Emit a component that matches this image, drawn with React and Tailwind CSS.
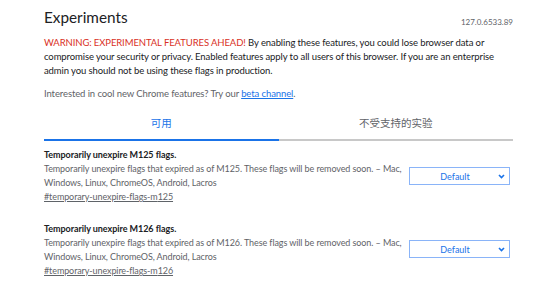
import React from "react";

function Chevron() {
  return (
    <svg width="7" height="5" viewBox="0 0 7 5" className="shrink-0">
      <path d="M1 1 L3.5 3.6 L6 1" fill="none" stroke="#1a73e8" strokeWidth="1.6" />
    </svg>
  );
}

function Flag({ m, selTop }) {
  return (
    <div className="flex items-start justify-between">
      <div className="w-[360px]">
        <div className="text-[9px] leading-[14px] font-bold text-[#202124] tracking-[-0.05px]">
          Temporarily unexpire M{m} flags.
        </div>
        <div className="text-[9px] leading-[14px] text-[#5f6368] tracking-[-0.09px]">
          Temporarily unexpire flags that expired as of M{m}. These flags will be removed soon. – Mac, Windows, Linux, ChromeOS, Android, Lacros
        </div>
        <div className="text-[9px] leading-[14px] text-[#5f6368] underline tracking-[-0.1px]">
          #temporary-unexpire-flags-m{m}
        </div>
      </div>
      <div className={`${selTop} mr-[3px] w-[101px] h-[18px] border border-[#8ab4f8] flex items-center pl-[2px] pr-[4px]`}>
        <span className="flex-1 text-center text-[9px] text-[#1a73e8] leading-none">Default</span>
        <Chevron />
      </div>
    </div>
  );
}

export default function App() {
  return (
    <div
      className="w-[554px] h-[285px] overflow-hidden bg-white"
      style={{ fontFamily: 'Lato, "Noto Sans CJK SC", sans-serif' }}
    >
      <div className="ml-[44px] w-[469px] pt-[7px]">
        <div className="flex items-center justify-between h-[20px]">
          <h1 className="text-[15.3px] leading-[20px] text-[#202124]">Experiments</h1>
          <span className="text-[8px] text-[#5f6368] mt-[9px]">127.0.6533.89</span>
        </div>
        <p className="mt-[9px] text-[9.5px] leading-[14px] text-[#202124] tracking-[-0.1px]">
          <span className="text-[#d93025]">WARNING: EXPERIMENTAL FEATURES AHEAD!</span> By enabling these features, you could lose browser data or compromise your security or privacy. Enabled features apply to all users of this browser. If you are an enterprise admin you should not be using these flags in production.
        </p>
        <p className="mt-[9px] text-[9.5px] leading-[14px] text-[#5f6368] tracking-[-0.1px]">
          Interested in cool new Chrome features? Try our{" "}
          <span className="text-[#1a73e8] underline">beta channel</span>.
        </p>
        <div className="mt-[10px] flex">
          <div className="flex-1 h-[30px] pb-[2px] flex items-center justify-center text-[10.5px] text-[#1a73e8] border-b-2 border-[#1a73e8]">
            可用
          </div>
          <div className="flex-1 h-[30px] pb-[2px] flex items-center justify-center text-[10.5px] text-[#5f6368] border-b-2 border-[#c8c8c8]">
            不受支持的实验
          </div>
        </div>
        <div className="mt-[7px] flex flex-col gap-[18px]">
          <Flag m={125} selTop="mt-[19px]" />
          <Flag m={126} selTop="mt-[18px]" />
        </div>
      </div>
    </div>
  );
}
